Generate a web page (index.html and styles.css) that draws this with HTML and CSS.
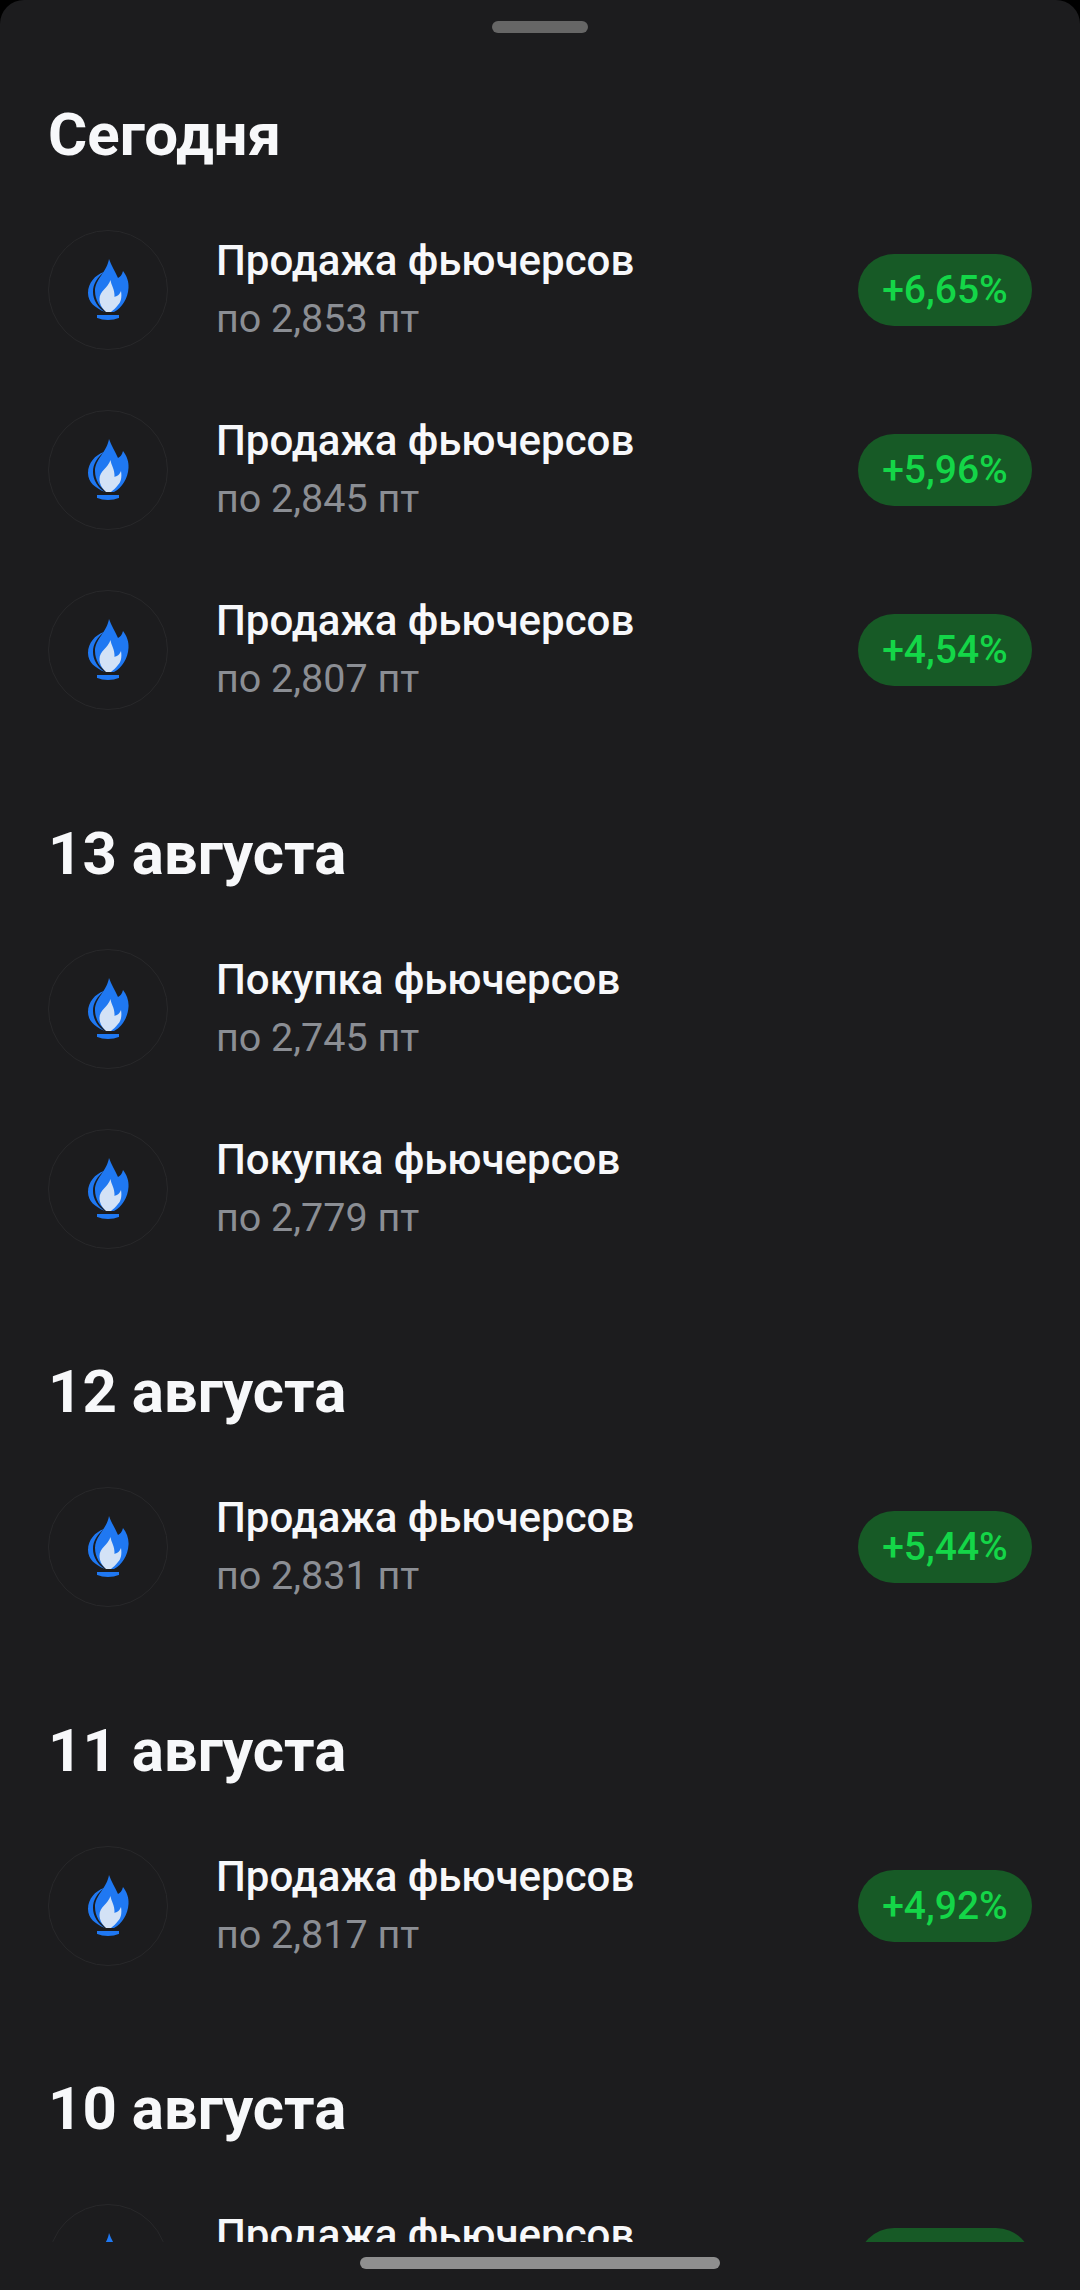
FILE: index.html
```html
<!DOCTYPE html>
<html lang="ru">
<head>
    <meta charset="UTF-8">
    <meta name="viewport" content="width=device-width, initial-scale=1.0">
    <title>Сделки</title>
    <link rel="stylesheet" href="styles.css">
</head>
<body>
    <svg class="sprite" width="0" height="0">
        <symbol id="gas" viewBox="0 0 60 70">
            <!-- outer leaf -->
            <path fill="#1f78f2" d="M26 22C17 25 10 33 10 43C10 52 17 58 27 62C20 58 15 50 15 42C15 34 19 28 26 22Z"/>
            <!-- main flame -->
            <path fill="#1f78f2" d="M31 9C33 15 37 21 40 28C42 27 44 25 45 21C49 26 51 32 50.500 38C50 48 44 58 36 62L29 62C22 58 17 50 17 41C17 29 29 22 31 9Z"/>
            <!-- inner flame -->
            <path fill="#d3e2f6" d="M32.500 30C33 35 37 39 36.500 47C39 46 41.500 45 43 41C44 47 43 52 40 55C38 58 35 60 33 62L28 62C24 58 21.500 54 21.500 49C21.500 41 30 38 32.500 30Z"/>
            <rect fill="#1f78f2" x="19" y="65" width="22" height="5"/>
        </symbol>
    </svg>
    <div class="sheet">
        <div class="handle"></div>
        <div class="list">
            <section class="day">
                <h2>Сегодня</h2>
                <div class="row">
                    <svg class="icon"><use href="#gas"/></svg>
                    <div class="info"><div class="name">Продажа фьючерсов</div><div class="price">по 2,853 пт</div></div>
                    <span class="badge">+6,65%</span>
                </div>
                <div class="row">
                    <svg class="icon"><use href="#gas"/></svg>
                    <div class="info"><div class="name">Продажа фьючерсов</div><div class="price">по 2,845 пт</div></div>
                    <span class="badge">+5,96%</span>
                </div>
                <div class="row">
                    <svg class="icon"><use href="#gas"/></svg>
                    <div class="info"><div class="name">Продажа фьючерсов</div><div class="price">по 2,807 пт</div></div>
                    <span class="badge">+4,54%</span>
                </div>
            </section>
            <section class="day">
                <h2>13 августа</h2>
                <div class="row">
                    <svg class="icon"><use href="#gas"/></svg>
                    <div class="info"><div class="name">Покупка фьючерсов</div><div class="price">по 2,745 пт</div></div>
                </div>
                <div class="row">
                    <svg class="icon"><use href="#gas"/></svg>
                    <div class="info"><div class="name">Покупка фьючерсов</div><div class="price">по 2,779 пт</div></div>
                </div>
            </section>
            <section class="day">
                <h2>12 августа</h2>
                <div class="row">
                    <svg class="icon"><use href="#gas"/></svg>
                    <div class="info"><div class="name">Продажа фьючерсов</div><div class="price">по 2,831 пт</div></div>
                    <span class="badge">+5,44%</span>
                </div>
            </section>
            <section class="day">
                <h2>11 августа</h2>
                <div class="row">
                    <svg class="icon"><use href="#gas"/></svg>
                    <div class="info"><div class="name">Продажа фьючерсов</div><div class="price">по 2,817 пт</div></div>
                    <span class="badge">+4,92%</span>
                </div>
            </section>
            <section class="day">
                <h2>10 августа</h2>
                <!-- this row is cut by the end of the list -->
                <div class="row">
                    <svg class="icon"><use href="#gas"/></svg>
                    <div class="info"><div class="name">Продажа фьючерсов</div><div class="price"></div></div>
                    <span class="badge"></span>
                </div>
            </section>
        </div>
        <div class="home-bar"></div>
    </div>
</body>
</html>
```
FILE: styles.css
```css
* {
    box-sizing: border-box;
}

html, body {
    margin: 0;
    padding: 0;
    background-color: #000;
}

.sprite {
    display: none;
}

.sheet {
    width: 1080px;
    height: 2290px;
    background-color: #1c1c1e;
    border-radius: 24px 24px 0 0;
    font-family: Roboto, "Noto Sans", sans-serif;
    overflow: hidden;
    padding-top: 21px;
}

.handle {
    width: 96px;
    height: 12px;
    margin: 0 auto;
    background-color: #666;
    border-radius: 6px;
}

.list {
    height: 2209px;
    overflow: hidden;
    padding: 68px 48px 0;
}

.day + .day {
    margin-top: 79.6px;
}

h2 {
    margin: 0 0 31px;
    font-size: 60px;
    line-height: 68px;
    font-weight: 700;
    color: #f7f8fa;
}

.row {
    height: 180px;
    display: flex;
    align-items: center;
}

.icon {
    width: 120px;
    height: 120px;
    flex: none;
    border: 1px solid #28282a;
    border-radius: 50%;
    margin-right: 48px;
    padding: 19px 29px 29px;
}

.info {
    flex: 1;
}

.name {
    font-size: 42px;
    line-height: 58px;
    font-weight: 500;
    color: #f7f8fa;
}

.price {
    min-height: 58px;
    font-size: 39.5px;
    line-height: 58px;
    color: #8b8e94;
}

.badge {
    width: 174px;
    height: 72px;
    border-radius: 36px;
    background-color: #175a26;
    color: #14d648;
    font-size: 39px;
    font-weight: 500;
    line-height: 72px;
    text-align: center;
}

.home-bar {
    width: 360px;
    height: 12px;
    margin: 15px auto 0;
    background-color: #8f8f8f;
    border-radius: 6px;
}
```
